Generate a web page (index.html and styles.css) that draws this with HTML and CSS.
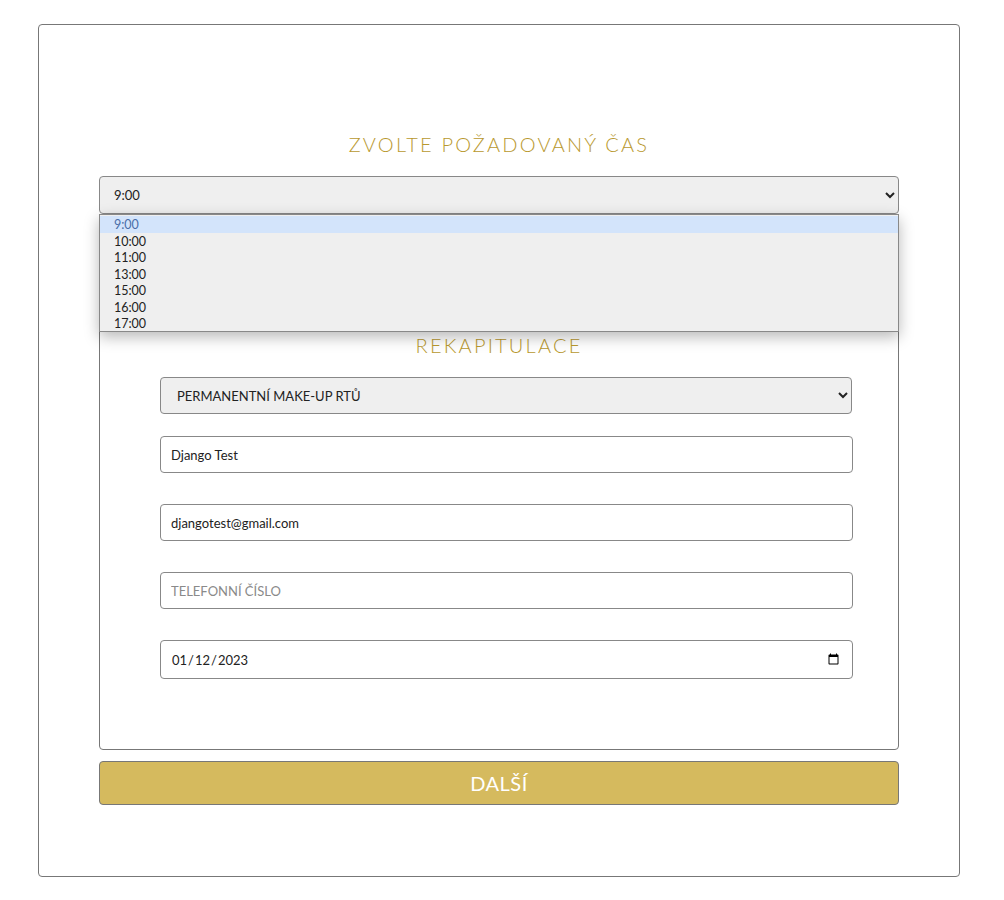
FILE: index.html
```html
<!DOCTYPE html>
<html lang="cs">
<head>
    <meta charset="UTF-8">
    <title>Rezervace - zvolte čas</title>
    <link rel="stylesheet" href="styles.css">
</head>
<body>
    <div class="card">
        <h2 class="title title-time">ZVOLTE POŽADOVANÝ ČAS</h2>

        <div class="time-field">
            <select class="time-select">
                <option>9:00</option>
                <option>10:00</option>
                <option>11:00</option>
                <option>13:00</option>
                <option>15:00</option>
                <option>16:00</option>
                <option>17:00</option>
            </select>
            <!-- open dropdown of the time select -->
            <ul class="time-list">
                <li class="active">9:00</li>
                <li>10:00</li>
                <li>11:00</li>
                <li>13:00</li>
                <li>15:00</li>
                <li>16:00</li>
                <li>17:00</li>
            </ul>
        </div>

        <div class="summary">
            <h2 class="title">REKAPITULACE</h2>
            <select class="field field-select">
                <option>PERMANENTNÍ MAKE-UP RTŮ</option>
            </select>
            <input class="field field-name" type="text" value="Django Test">
            <input class="field" type="email" value="djangotest@gmail.com">
            <input class="field" type="tel" placeholder="TELEFONNÍ ČÍSLO">
            <input class="field field-date" type="date" value="2023-01-12">
        </div>

        <button class="next-btn">DALŠÍ</button>
    </div>
</body>
</html>
```

FILE: styles.css
```css
body {
    font-family: Lato, 'Open Sans', sans-serif;
    margin: 0;
    padding: 0;
    background: #fff;
    color: #222;
}

.card {
    width: 922px;
    margin: 24px 0 0 38px;
    padding: 0 60px 71px;
    box-sizing: border-box;
    border: 1px solid #777;
    border-radius: 4px;
}

.title {
    margin: 0 0 20px;
    font-size: 20px;
    line-height: 24px;
    font-weight: 300;
    letter-spacing: 2.2px;
    text-align: center;
    color: #b9992f;
}

.title-time {
    margin-top: 107px;
}

.time-field {
    position: relative;
}

.time-select {
    display: block;
    width: 100%;
    height: 38px;
    padding: 0 8px 0 10px;
    font-family: inherit;
    font-size: 13px;
    color: #222;
    background: #efefef;
    border: 1px solid #888;
    border-radius: 4px;
}

.time-list {
    position: absolute;
    top: 38px;
    left: 0;
    right: 0;
    z-index: 5;
    margin: 0;
    padding: 1px 0 0;
    list-style: none;
    background: #efefef;
    border: 1px solid #888;
    box-shadow: 0 5px 14px rgba(0,0,0,0.28);
    height: 118px;
    box-sizing: border-box;
}

.time-list li {
    height: 16.5px;
    line-height: 17px;
    padding-left: 14px;
    font-size: 12.5px;
    color: #222;
}

.time-list li.active {
    background: #d3e4fb;
    color: #4a6ea8;
}

.summary {
    margin-top: 20px;
    padding: 98px 0 70px;
    border: 1px solid #777;
    border-radius: 4px;
}

.field {
    display: block;
    width: 693px;
    height: 37px;
    box-sizing: border-box;
    margin: 0 0 31px 60px;
    padding: 0 10px;
    font-family: inherit;
    font-size: 13px;
    color: #222;
    background: #fff;
    border: 1px solid #888;
    border-radius: 4px;
}

.field::placeholder {
    color: #8a8a8a;
}

.field-select {
    width: 692px;
    padding-left: 12px;
    background: #efefef;
    margin-bottom: 22px;
}

.field-date {
    height: 39px;
    margin-bottom: 0;
}

.next-btn {
    display: block;
    width: 100%;
    height: 44px;
    margin-top: 11px;
    font-family: inherit;
    font-size: 20px;
    letter-spacing: 0.5px;
    color: #fff;
    background: #d5ba5e;
    border: 1px solid #777;
    border-radius: 4px;
    cursor: pointer;
}
```
